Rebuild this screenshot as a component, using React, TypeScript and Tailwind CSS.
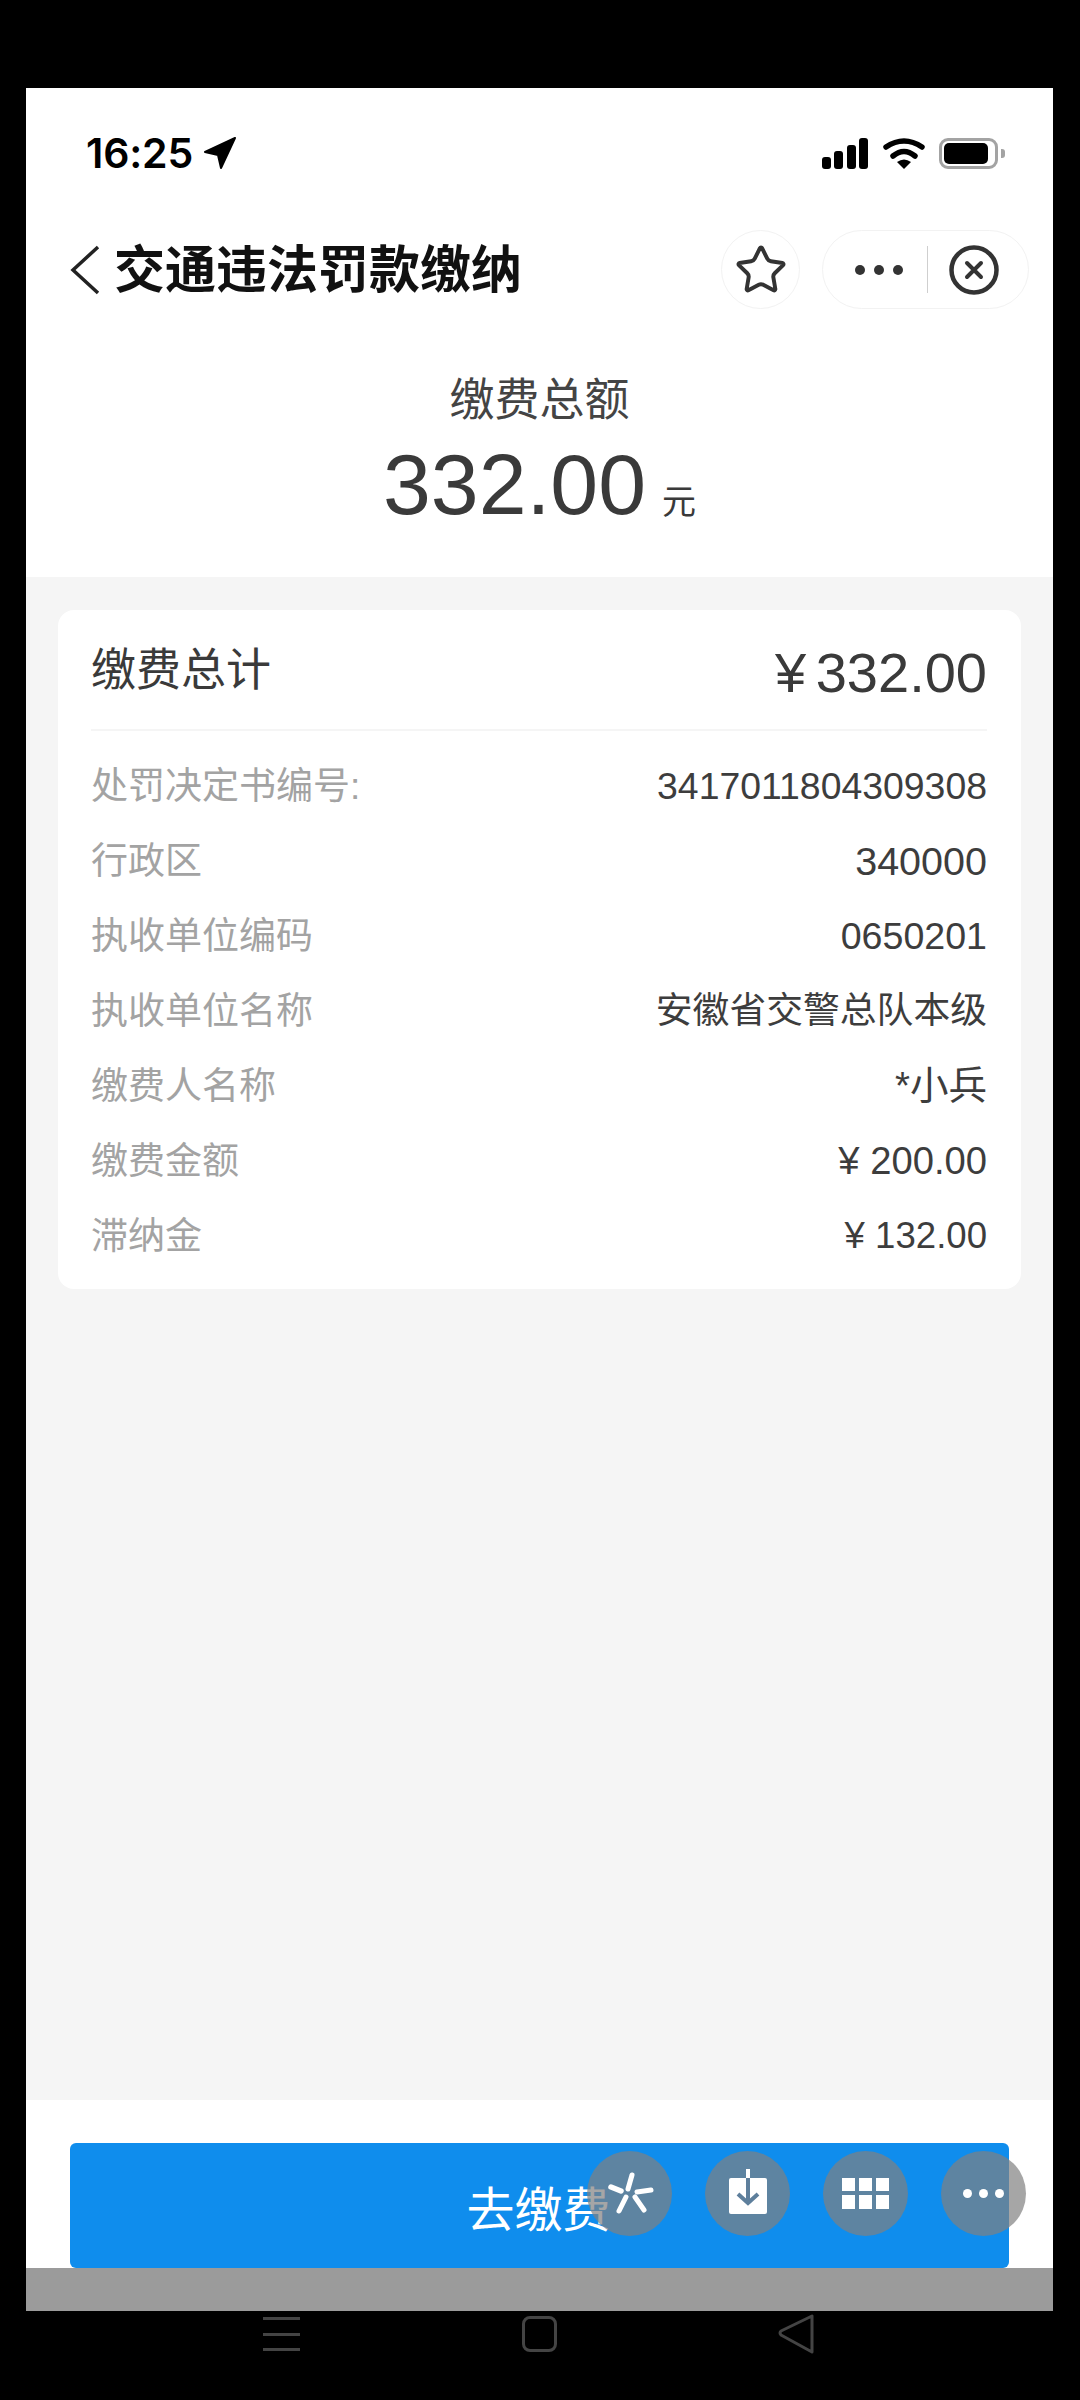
import { Star } from "lucide-react";

const sans = "font-['Liberation_Sans','Noto_Sans_CJK_SC',sans-serif]";

const rows = [
  ["处罚决定书编号:", "3417011804309308", "text-[37.4px]"],
  ["行政区", "340000", "text-[39.5px]"],
  ["执收单位编码", "0650201", "text-[37.6px]"],
  ["执收单位名称", "安徽省交警总队本级", "text-[36.8px]"],
  ["缴费人名称", "*小兵", "text-[38.5px]"],
  ["缴费金额", "¥ 200.00", "text-[38.2px]"],
  ["滞纳金", "¥ 132.00", "text-[36.6px]"],
];

function StatusBar() {
  return (
    <div className="flex items-center h-[34px] mt-[48px] pl-[60px] pr-[48px]">
      <span className="font-['Inter',sans-serif] text-[41px] leading-none font-semibold text-black tracking-[-0.2px]">16:25</span>
      <svg width="34" height="34" viewBox="0 0 34 34" className="ml-[10px]">
        <path d="M32 2 L2 16 L15 19 L18 32 Z" fill="#000" stroke="#000" strokeWidth="2" strokeLinejoin="round" />
      </svg>
      <div className="flex-1" />
      <svg width="46" height="31" viewBox="0 0 46 31" className="mr-[1px]">
        <rect x="0" y="19" width="9" height="12" rx="3" fill="#000" />
        <rect x="12" y="13" width="9" height="18" rx="3" fill="#000" />
        <rect x="25" y="7" width="9" height="24" rx="3" fill="#000" />
        <rect x="37" y="0" width="9" height="31" rx="3" fill="#000" />
      </svg>
      <svg width="42" height="32" viewBox="0 0 42 32" className="ml-[14px]">
        <path d="M3 10 Q21 -2 39 10" fill="none" stroke="#000" strokeWidth="5.5" strokeLinecap="round" />
        <path d="M10 19 Q21 10 32 19" fill="none" stroke="#000" strokeWidth="5.5" strokeLinecap="round" />
        <path d="M14 25 Q21 20 28 25 L21 32 Z" fill="#000" />
      </svg>
      <div className="ml-[14px] w-[59px] h-[31px] rounded-[9px] border-[3px] border-[#a3a3a3] p-[2px] pr-[7px]">
        <div className="w-full h-full rounded-[5px] bg-black" />
      </div>
      <div className="ml-[3px] w-[4px] h-[9px] rounded-r-[3px] bg-[#a3a3a3]" />
    </div>
  );
}

function TitleBar() {
  return (
    <div className="flex items-center h-[79px] mt-[60px]">
      <svg width="32" height="50" viewBox="0 0 32 50" className="ml-[43px]">
        <path d="M29 2 L4 25 L29 48" fill="none" stroke="#222" strokeWidth="3.5" />
      </svg>
      <span className="ml-[13px] mb-[6px] text-[51px] leading-none font-bold text-[#111] font-['Noto_Sans_CJK_SC',sans-serif]">交通违法罚款缴纳</span>
      <div className="flex-1" />
      <div className="w-[79px] h-[79px] rounded-full border border-[#f2f2f2] flex items-center justify-center">
        <Star size={54} strokeWidth={1.75} color="#333" />
      </div>
      <div className="ml-[22px] mr-[24px] w-[207px] h-[79px] rounded-full border border-[#f2f2f2] flex items-center pl-[32px]">
        <div className="flex gap-[9px]">
          <div className="w-[10px] h-[10px] rounded-full bg-[#333]" />
          <div className="w-[10px] h-[10px] rounded-full bg-[#333]" />
          <div className="w-[10px] h-[10px] rounded-full bg-[#333]" />
        </div>
        <div className="ml-[24px] w-px h-[47px] bg-[#cfcfcf]" />
        <svg width="50" height="50" viewBox="0 0 50 50" className="ml-[21px]">
          <circle cx="25" cy="25" r="22.5" fill="none" stroke="#333" strokeWidth="4.5" />
          <path d="M18 18 L32 32 M32 18 L18 32" stroke="#333" strokeWidth="4" strokeLinecap="round" />
        </svg>
      </div>
    </div>
  );
}

function Total() {
  return (
    <div className={`flex flex-col items-center ${sans} text-[#3a3a3a]`}>
      <span className="mt-[58px] text-[45px] leading-[60px] text-[#444] font-['Noto_Sans_CJK_SC',sans-serif]">缴费总额</span>
      <div className="flex items-baseline mt-[12px] h-[90px]">
        <span className="text-[86px] leading-[90px]">332.00</span>
        <span className="ml-[16px] text-[34px] leading-none font-['Noto_Sans_CJK_SC',sans-serif]">元</span>
      </div>
    </div>
  );
}

function Card() {
  return (
    <div className={`mx-[32px] mt-[33px] bg-white rounded-[16px] pl-[33px] pr-[34px] pb-[15px] ${sans}`}>
      <div className="h-[121px] flex items-center justify-between border-b-2 border-[#f5f5f5] pb-[6px]">
        <span className="text-[45px] leading-none text-[#3a3a3a] font-['Noto_Sans_CJK_SC',sans-serif]">缴费总计</span>
        <span className="text-[56px] leading-none text-[#3a3a3a] mt-[12px] [word-spacing:-6px]">¥ 332.00</span>
      </div>
      <div className="pt-[18px]">
        {rows.map(([label, value, size]) => (
          <div key={label} className="h-[75px] flex items-center justify-between">
            <span className="text-[37px] leading-none text-[#a3a3a3]">{label}</span>
            <span className={`${size} leading-none text-[#3d3d3d]`}>{value}</span>
          </div>
        ))}
      </div>
    </div>
  );
}

function Toolbar() {
  const circle = "w-[85px] h-[85px] rounded-full bg-[rgba(128,128,128,0.7)] flex items-center justify-center";
  return (
    <div className="absolute left-[561px] top-[43px] flex gap-[33px] mt-[8px]">
      <div className={circle}>
        <svg width="50" height="50" viewBox="0 0 50 50" fill="none" stroke="#fff" strokeLinecap="round">
          <path d="M27 6 L23 20" strokeWidth="5" />
          <path d="M46 21 L32 23" strokeWidth="5" />
          <path d="M39 41 L30 28" strokeWidth="5" />
          <path d="M14 42 L21 28" strokeWidth="5" />
          <path d="M6 18 L16 22" strokeWidth="5.5" />
        </svg>
      </div>
      <div className={circle}>
        <svg width="40" height="50" viewBox="0 0 40 50">
          <rect x="1" y="9" width="38" height="36" rx="2" fill="#fff" />
          <rect x="18" y="0" width="4" height="9" fill="#fff" />
          <path d="M20 9 V34 M10 25 L20 34 L30 25" fill="none" stroke="#5e7f9c" strokeWidth="4" />
        </svg>
      </div>
      <div className={circle}>
        <svg width="47" height="31" viewBox="0 0 47 31" fill="#fff">
          <rect x="0" y="0" width="13" height="13" />
          <rect x="17" y="0" width="13" height="13" />
          <rect x="34" y="0" width="13" height="13" />
          <rect x="0" y="17" width="13" height="14" />
          <rect x="17" y="17" width="13" height="14" />
          <rect x="34" y="17" width="13" height="14" />
        </svg>
      </div>
      <div className={`${circle} gap-[7px]`}>
        <div className="w-[9px] h-[9px] rounded-full bg-white" />
        <div className="w-[9px] h-[9px] rounded-full bg-white" />
        <div className="w-[9px] h-[9px] rounded-full bg-white" />
      </div>
    </div>
  );
}

export default function App() {
  return (
    <div className="w-[1080px] h-[2400px] bg-black pt-[88px] flex flex-col items-start">
      <div className="ml-[26px] w-[1027px] h-[2223px] flex flex-col">
        <div className="h-[489px] bg-white overflow-hidden">
          <StatusBar />
          <TitleBar />
          <Total />
        </div>
        <div className="h-[1523px] bg-[#f5f5f5] overflow-hidden">
          <Card />
        </div>
        <div className="relative h-[168px] bg-white pt-[43px] px-[44px]">
          <div className="h-[125px] w-[939px] rounded-[6px] bg-[#0f8ded] flex items-center justify-center">
            <span className="text-[48px] leading-none text-white font-['Noto_Sans_CJK_SC',sans-serif] mr-[2px]">去缴费</span>
          </div>
          <Toolbar />
        </div>
        <div className="h-[43px] bg-[#9b9b9b]" />
      </div>
      <div className="flex items-center w-full h-[40px] mt-[3px] pl-[263px]">
        <div className="w-[37px] h-[34px] flex flex-col justify-between">
          <div className="h-[3px] bg-[#444]" />
          <div className="h-[3px] bg-[#444]" />
          <div className="h-[3px] bg-[#444]" />
        </div>
        <div className="ml-[222px] w-[35px] h-[36px] rounded-[8px] border-[3px] border-[#444]" />
        <svg width="38" height="40" viewBox="0 0 38 40" className="ml-[221px]">
          <path d="M34 2 V38 L3 21 Q1 19 3 17 Z" fill="none" stroke="#444" strokeWidth="3" strokeLinejoin="round" />
        </svg>
      </div>
    </div>
  );
}
